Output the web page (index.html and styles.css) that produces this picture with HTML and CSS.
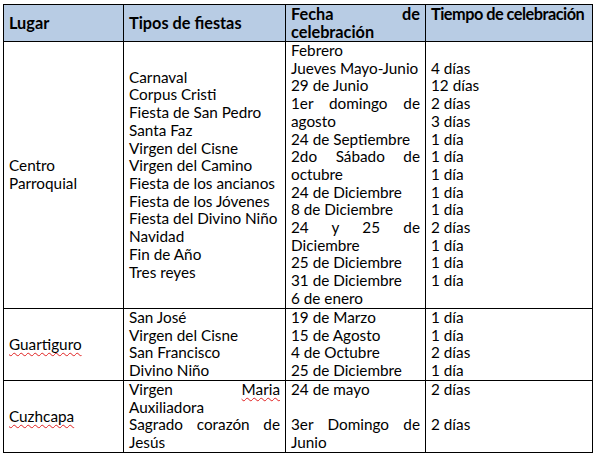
FILE: index.html
```html
<!DOCTYPE html>
<html lang="es">
<head>
<meta charset="UTF-8">
<title>Fiestas</title>
<link rel="stylesheet" href="styles.css">
</head>
<body>
    <table class="fiestas">
        <colgroup>
            <col class="col-lugar">
            <col class="col-tipo">
            <col class="col-fecha">
            <col class="col-tiempo">
        </colgroup>
        <thead>
            <tr class="head-row">
                <th class="mid">Lugar</th>
                <th class="mid">Tipos de fiestas</th>
                <th class="top">
                    <div class="just">Fecha de</div>
                    <div>celebración</div>
                </th>
                <th class="top tight">Tiempo de celebración</th>
            </tr>
        </thead>
        <tbody>
            <tr class="row-centro">
                <td class="mid">Centro<br>Parroquial</td>
                <td class="mid">
                    <div>Carnaval</div>
                    <div>Corpus Cristi</div>
                    <div>Fiesta de San Pedro</div>
                    <div>Santa Faz</div>
                    <div>Virgen del Cisne</div>
                    <div>Virgen del Camino</div>
                    <div>Fiesta de los ancianos</div>
                    <div>Fiesta de los Jóvenes</div>
                    <div>Fiesta del Divino Niño</div>
                    <div>Navidad</div>
                    <div>Fin de Año</div>
                    <div>Tres reyes</div>
                </td>
                <td class="top">
                    <div>Febrero</div>
                    <div>Jueves Mayo-Junio</div>
                    <div>29 de Junio</div>
                    <div class="just">1er domingo de</div>
                    <div>agosto</div>
                    <div>24 de Septiembre</div>
                    <div class="just">2do Sábado de</div>
                    <div>octubre</div>
                    <div>24 de Diciembre</div>
                    <div>8 de Diciembre</div>
                    <div class="just">24 y 25 de</div>
                    <div>Diciembre</div>
                    <div>25 de Diciembre</div>
                    <div>31 de Diciembre</div>
                    <div>6 de enero</div>
                </td>
                <td class="top">
                    <div class="blank"></div>
                    <div>4 días</div>
                    <div>12 días</div>
                    <div>2 días</div>
                    <div>3 días</div>
                    <div>1 día</div>
                    <div>1 día</div>
                    <div>1 día</div>
                    <div>1 día</div>
                    <div>1 día</div>
                    <div>2 días</div>
                    <div>1 día</div>
                    <div>1 día</div>
                    <div>1 día</div>
                </td>
            </tr>
            <tr class="row-guarti">
                <td class="mid"><span class="spell">Guartiguro</span></td>
                <td class="top">
                    <div>San José</div>
                    <div>Virgen del Cisne</div>
                    <div>San Francisco</div>
                    <div>Divino Niño</div>
                </td>
                <td class="top">
                    <div>19 de Marzo</div>
                    <div>15 de Agosto</div>
                    <div>4 de Octubre</div>
                    <div>25 de Diciembre</div>
                </td>
                <td class="top">
                    <div>1 día</div>
                    <div>1 día</div>
                    <div>2 días</div>
                    <div>1 día</div>
                </td>
            </tr>
            <tr class="row-cuzh">
                <td class="mid"><span class="spell">Cuzhcapa</span></td>
                <td class="top">
                    <div class="just">Virgen <span class="spell">Maria</span></div>
                    <div>Auxiliadora</div>
                    <div class="just">Sagrado corazón de</div>
                    <div>Jesús</div>
                </td>
                <td class="top">
                    <div>24 de mayo</div>
                    <div class="blank"></div>
                    <div class="just">3er Domingo de</div>
                    <div>Junio</div>
                </td>
                <td class="top">
                    <div>2 días</div>
                    <div class="blank"></div>
                    <div>2 días</div>
                </td>
            </tr>
        </tbody>
    </table>
</body>
</html>
```

FILE: styles.css
```css
body {
    margin: 0;
    padding: 4px 3px 0;
    background: #fff;
    font-family: Lato, "Open Sans", sans-serif;
    font-size: 15.3px;
    color: #000;
}

.fiestas {
    border-collapse: collapse;
    table-layout: fixed;
    width: 589px;
    line-height: 17.7px;
}

.col-lugar { width: 120px; }
.col-tipo { width: 162px; }
.col-fecha { width: 140px; }
.col-tiempo { width: 167px; }

.fiestas th,
.fiestas td {
    border: 1px solid #000;
    padding: 0 5px;
    text-align: left;
    white-space: nowrap;
}

.fiestas th {
    background: #b8cce4;
    font-size: 16.3px;
    font-weight: bold;
}

.head-row { height: 37px; }
.row-centro { height: 267px; }
.row-guarti { height: 72px; }
.row-cuzh { height: 71px; }

.mid { vertical-align: middle; }
.top { vertical-align: top; }

.tight {
    letter-spacing: -0.5px;
}

.just {
    text-align: justify;
    text-align-last: justify;
}

.blank { height: 17.7px; }

.spell {
    text-decoration: underline wavy #e02020;
    text-decoration-thickness: 1px;
    text-decoration-skip-ink: none;
    text-underline-offset: 2px;
}
```
